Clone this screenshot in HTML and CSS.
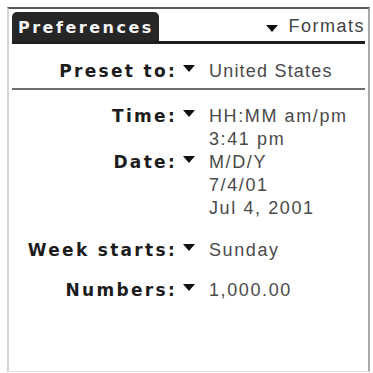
FILE: index.html
```html
<!DOCTYPE html>
<html>
<head>
<meta charset="utf-8">
<link rel="stylesheet" href="styles.css">
</head>
<body>
<div class="frame">
  <div class="header">
    <div class="tab">Preferences</div>
    <div class="menu"><span class="arrow"></span><span class="menu-text">Formats</span></div>
  </div>
  <div class="row preset">
    <div class="label">Preset to:</div>
    <div class="arrow-cell"><span class="arrow"></span></div>
    <div class="values"><div>United States</div></div>
  </div>
  <div class="rule"></div>
  <div class="rows">
    <div class="row">
      <div class="label">Time:</div>
      <div class="arrow-cell"><span class="arrow"></span></div>
      <div class="values"><div>HH:MM am/pm</div><div>3:41 pm</div></div>
    </div>
    <div class="row">
      <div class="label">Date:</div>
      <div class="arrow-cell"><span class="arrow"></span></div>
      <div class="values"><div>M/D/Y</div><div>7/4/01</div><div>Jul 4, 2001</div></div>
    </div>
    <div class="row week">
      <div class="label">Week starts:</div>
      <div class="arrow-cell"><span class="arrow"></span></div>
      <div class="values"><div>Sunday</div></div>
    </div>
    <div class="row numbers">
      <div class="label">Numbers:</div>
      <div class="arrow-cell"><span class="arrow"></span></div>
      <div class="values"><div>1,000.00</div></div>
    </div>
  </div>
</div>
</body>
</html>
```
FILE: styles.css
```css
html, body {
  margin: 0;
  padding: 0;
  background: #ffffff;
}
.frame {
  box-sizing: border-box;
  margin: 7px 3px 0 7px;
  width: 363px;
  height: 365px;
  border-top: 2px solid #5a5a5a;
  border-left: 2px solid #d4d4d4;
  border-right: 2px solid #a8a8a8;
  border-bottom: 1px solid #e2e2e2;
  background: #fff;
}
.header {
  display: flex;
  justify-content: space-between;
  align-items: flex-end;
  margin: 3px 3px 0 3px;
  border-bottom: 3px solid #1e1e1e;
}
.tab {
  background: #262626;
  color: #f4f4f4;
  font-family: "DejaVu Sans", sans-serif;
  font-weight: bold;
  font-size: 16px;
  letter-spacing: 2.5px;
  height: 29px;
  line-height: 31px;
  padding: 0 5px 0 6px;
  border-radius: 5px 5px 0 0;
}
.menu {
  display: flex;
  align-items: baseline;
  font-family: "Liberation Sans", sans-serif;
  font-size: 18px;
  letter-spacing: 1.5px;
  color: #444;
  line-height: 29px;
}
.menu .arrow {
  margin-right: 10px;
}
.arrow {
  display: inline-block;
  width: 0;
  height: 0;
  border-left: 6.5px solid transparent;
  border-right: 6.5px solid transparent;
  border-top: 7px solid #111;
  vertical-align: 5px;
}
.row {
  display: flex;
  align-items: flex-start;
  line-height: 23px;
}
.label {
  width: 168px;
  text-align: right;
  margin-right: 0;
  font-family: "DejaVu Sans", sans-serif;
  font-weight: bold;
  font-size: 17px;
  letter-spacing: 2.3px;
  color: #1c1c1c;
}
.arrow-cell {
  width: 13px;
  margin-left: 6px;
  margin-right: 13px;
  font-size: 17px;
}
.values {
  font-family: "Liberation Sans", sans-serif;
  font-size: 18px;
  letter-spacing: 1.6px;
  color: #4a4a4a;
}
.preset {
  padding-top: 16px;
  padding-bottom: 5px;
}
.preset .values {
  letter-spacing: 1.2px;
}
.rule {
  margin: 0 3px;
  height: 2px;
  background: #6e6e6e;
}
.rows {
  padding-top: 15px;
}
.week {
  margin-top: 19px;
}
.numbers {
  margin-top: 17px;
}
```
